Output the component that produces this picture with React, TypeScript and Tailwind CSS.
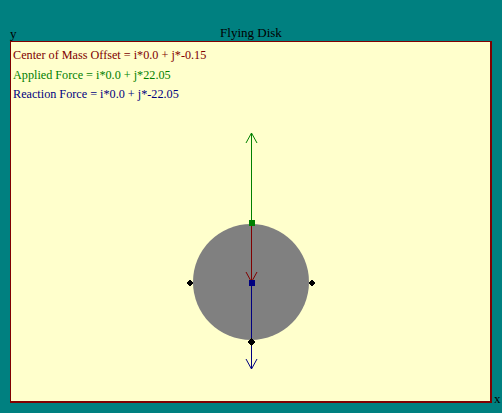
export default function App() {
    const cx = 241;
    const cy = 241;
    const dot = (x: number, y: number, color: string) => (
        <polygon points={`${x},${y - 3} ${x + 3},${y} ${x},${y + 3} ${x - 3},${y}`} fill={color} stroke={color} strokeWidth={1} />
    );

    return (
        <div className="w-[502px] h-[413px] bg-[#008080] font-['Liberation_Serif',serif] text-[13px] text-black overflow-hidden">
            <div className="relative h-[41px]">
                <span className="absolute left-[10px] top-[27px] leading-none">y</span>
                <div className="pt-[26px] text-center leading-none">Flying Disk</div>
            </div>
            <div className="flex">
                <div className="relative ml-[10px] w-[482px] h-[362px] bg-[#ffffcc] border-t border-l border-r-2 border-b-2 border-[#800000]">
                    <div className="pl-[2px] pt-[4px] text-[12.2px] leading-[19.5px]">
                        <div className="text-[#800000]">Center of Mass Offset = i*0.0 + j*-0.15</div>
                        <div className="text-[#008000]">Applied Force = i*0.0 + j*22.05</div>
                        <div className="text-[#000080]">Reaction Force = i*0.0 + j*-22.05</div>
                    </div>
                    <svg className="absolute left-[-1px] top-[-1px]" width="482" height="362" shapeRendering="crispEdges">
                        <circle cx={cx} cy={cy} r={58} fill="#808080" shapeRendering="auto" />
                        <line x1={cx + 0.5} y1={cy - 59} x2={cx + 0.5} y2={92} stroke="#008000" />
                        <polyline points={`${cx - 5},${102} ${cx + 0.5},${92} ${cx + 6},${102}`} fill="none" stroke="#008000" shapeRendering="auto" />
                        <line x1={cx + 0.5} y1={cy - 59} x2={cx + 0.5} y2={cy} stroke="#800000" />
                        <polyline points={`${cx - 5},${cy - 10} ${cx + 0.5},${cy} ${cx + 6},${cy - 10}`} fill="none" stroke="#800000" shapeRendering="auto" />
                        <line x1={cx + 0.5} y1={cy} x2={cx + 0.5} y2={328} stroke="#000080" />
                        <polyline points={`${cx - 5},${318} ${cx + 0.5},${328} ${cx + 6},${318}`} fill="none" stroke="#000080" shapeRendering="auto" />
                        <rect x={cx - 2} y={cy - 62} width={6} height={6} fill="#008000" />
                        <rect x={cx - 2} y={cy - 2} width={6} height={6} fill="#000080" />
                        {dot(cx - 61, cy + 1, '#000000')}
                        {dot(cx + 61, cy + 1, '#000000')}
                        {dot(cx + 0.5, cy + 60, '#000000')}
                    </svg>
                </div>
                <span className="self-end ml-[2px] mb-[-2px] leading-none">x</span>
            </div>
        </div>
    );
}
